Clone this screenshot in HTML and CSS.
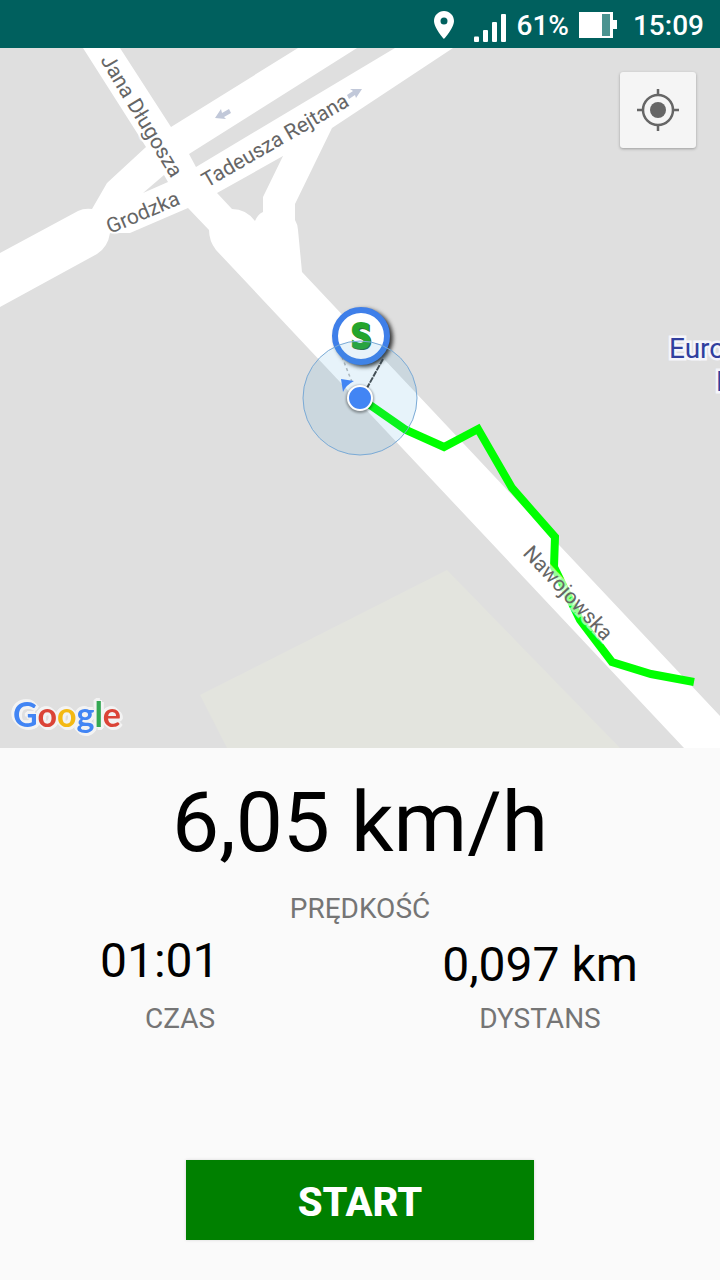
FILE: index.html
```html
<!DOCTYPE html>
<html lang="pl">
<head>
<meta charset="utf-8">
<meta name="viewport" content="width=device-width, initial-scale=1">
<title>Trening</title>
<link rel="stylesheet" href="styles.css">
</head>
<body>
<header class="status">
  <svg class="status-pin" viewBox="0 0 20 28" aria-hidden="true"><path fill="#fff" fill-rule="evenodd" d="M10 0C4.500 0 0 4.400 0 10c0 7 10 18 10 18s10-11 10-18C20 4.400 15.500 0 10 0zm0 6.500a3.500 3.500 0 1 1 0 7 3.500 3.500 0 0 1 0-7z"/></svg>
  <svg class="status-signal" viewBox="0 0 32 28" aria-hidden="true"><g fill="#fff"><rect x="0" y="22.500" width="5" height="5.500" rx="1"/><rect x="9" y="16" width="5" height="12" rx="1"/><rect x="18" y="8" width="5" height="20" rx="1"/><rect x="27" y="0" width="5" height="28" rx="1"/></g></svg>
  <span class="status-charge">61%</span>
  <svg class="status-battery" viewBox="0 0 38 26" aria-hidden="true"><path fill="#fff" d="M0 0h34v8h4v9h-4v9H0z"/><path fill="#4a9390" d="M23 2h8v22h-8z"/></svg>
  <time class="status-time">15:09</time>
</header>

<main class="screen">
  <section class="map" aria-label="Mapa">
    <svg class="map-canvas" viewBox="0 48 720 700" preserveAspectRatio="xMidYMid slice">
      <rect class="ground" x="0" y="48" width="720" height="700"/>
      <path class="park" d="M200 695 447 570 620 748H227z"/>
      <path class="road" fill-rule="evenodd" d="M83 48H120L171 127 298 48H453L332 128 295 204V220Q298 225 298 230L302 272 432 410 720 716V748H684L216 250Q209 241 209 230L188 208 130 233H110Q108 247 97 254L0 307V253L78 211Q84 208 92 209L107 183 146 147z
        M357 48 189 154 196 167 395 48z
        M143 193 164 175 168 182z
        M217 193 283 156 263 197V212Q258 214 255 221Q246 209 232 209z"/>
      <path class="oneway" d="M215 118 221 109 222 113 229 109 231 113 224 117 226 119z"/>
      <path class="oneway" d="M362 89 356 98 355 95 349 99 347 95 353 91 350 89z"/>
      <polyline class="track" points="360,398 406,430 444,447 478,429 512,488 555,537 554,567 580,620 612,662 651,674 694,682"/>
      <text class="street" transform="translate(100 60) rotate(59)">Jana Długosza</text>
      <text class="street" transform="translate(207 188) rotate(-30)">Tadeusza Rejtana</text>
      <text class="street" transform="translate(110 234) rotate(-23)">Grodzka</text>
      <text class="street" transform="translate(522 554) rotate(47)">Nawojowska</text>
      <text class="place" x="669" y="358">Euro</text>
      <text class="place" x="716" y="391">P</text>

      <path d="M383 359 367 388" stroke="#444" stroke-width="2" stroke-dasharray="6 1"/>
      <path d="M342 357 352 382" stroke="#bbb" stroke-width="1.500" stroke-dasharray="3 3"/>
      <circle class="pin-shade" cx="364" cy="338" r="29"/>
      <circle cx="361" cy="336" r="26" fill="#fff" stroke="#3f7fe9" stroke-width="6"/>
      <text class="pin-letter pin-letter-depth" x="362" y="349">S</text>
      <text class="pin-letter" x="361" y="348">S</text>
      <circle class="accuracy" cx="360" cy="398" r="57"/>
      <path d="M341 379 354 381Q346 385 343 392z" fill="#4285f4"/>
      <circle class="dot-shade" cx="360" cy="399" r="14"/>
      <circle cx="360" cy="398" r="12" fill="#4285f4" stroke="#fff" stroke-width="2"/>
    </svg>
    <button class="locate" type="button" aria-label="Moja lokalizacja">
      <svg class="locate-icon" viewBox="0 0 42 42" aria-hidden="true"><g fill="none" stroke="#666" stroke-width="2.500"><circle cx="21" cy="21" r="15"/><path d="M21 0v6M21 36v6M0 21h6M36 21h6"/></g><circle cx="21" cy="21" r="8" fill="#666"/></svg>
    </button>
    <a class="logo" href="#" aria-label="Google"><span class="blue">G</span><span class="red">o</span><span class="yellow">o</span><span class="blue">g</span><span class="green">l</span><span class="red">e</span></a>
  </section>

  <section class="panel">
    <div class="speed">6,05 km/h</div>
    <div class="label">PRĘDKOŚĆ</div>
    <div class="metrics">
      <div class="metric">
        <div class="elapsed">01:01</div>
        <div class="label">CZAS</div>
      </div>
      <div class="metric">
        <div class="distance">0,097 km</div>
        <div class="label">DYSTANS</div>
      </div>
    </div>
    <button class="start" type="button">START</button>
  </section>
</main>
</body>
</html>
```
FILE: styles.css
```css
* {
  box-sizing: border-box;
}

body {
  margin: 0;
  min-height: 100vh;
  display: flex;
  flex-direction: column;
  background: #fafafa;
  color: #000;
  font-family: Roboto, "Noto Sans", sans-serif;
}

.status {
  display: flex;
  align-items: center;
  justify-content: flex-end;
  height: 48px;
  padding: 4px 16px 0 0;
  background: #00605e;
  color: #fff;
  font-size: 28px;
  font-weight: 500;
  line-height: 32px;
}

.status-pin {
  width: 20px;
  height: 28px;
  margin: 0 20px 2px 0;
}

.status-signal {
  width: 32px;
  height: 28px;
  margin: 4px 11px 0 0;
}

.status-charge {
  margin-right: 10px;
}

.status-battery {
  width: 38px;
  height: 26px;
  margin: 0 16px 2px 0;
}

.screen {
  flex: 1;
  display: flex;
  flex-direction: column;
}

.map {
  position: relative;
  flex: 1;
  min-height: 320px;
  overflow: hidden;
}

.map-canvas {
  position: absolute;
  inset: 0;
  width: 100%;
  height: 100%;
}

.ground {
  fill: #dfdfdf;
}

.park {
  fill: #e3e4de;
}

.road {
  fill: #fff;
}

.oneway {
  fill: #c1c8d9;
}

.track {
  fill: none;
  stroke: #0f0;
  stroke-width: 8px;
}

.street {
  fill: #666;
  stroke: rgba(255, 255, 255, 0.6);
  stroke-width: 5px;
  paint-order: stroke;
  font-size: 21px;
}

.place {
  fill: #303f9f;
  stroke: #f5f5fa;
  stroke-width: 5px;
  paint-order: stroke;
  font-size: 28px;
}

.pin-shade {
  fill: #333;
  filter: blur(2px);
}

.pin-letter {
  fill: #25a52c;
  stroke: #25a52c;
  stroke-width: 2px;
  font-family: "DejaVu Sans Mono", monospace;
  font-size: 34px;
  font-weight: 700;
  text-anchor: middle;
}

.pin-letter-depth {
  fill: #2b6b3c;
  stroke: #2b6b3c;
}

.accuracy {
  fill: rgba(66, 160, 220, 0.13);
  stroke: #7aaad6;
  stroke-width: 1px;
}

.dot-shade {
  fill: rgba(0, 0, 0, 0.35);
  filter: blur(1px);
}

.locate {
  position: absolute;
  top: 24px;
  right: 24px;
  display: grid;
  place-items: center;
  width: 76px;
  height: 76px;
  padding: 0;
  border: 0;
  border-radius: 3px;
  background: #f5f5f5;
  box-shadow: 0 1px 3px rgba(0, 0, 0, 0.3);
}

.locate-icon {
  width: 42px;
  height: 42px;
}

.logo {
  position: absolute;
  left: 13px;
  bottom: 12px;
  font-family: Lato, sans-serif;
  font-size: 34px;
  font-weight: 700;
  line-height: 44px;
  text-decoration: none;
  filter: drop-shadow(2px 2px 0 #f3f3f3) drop-shadow(-2px -2px 0 #f3f3f3) drop-shadow(-1px 1px 0 #f3f3f3) drop-shadow(1px -1px 0 #f3f3f3);
}

.blue {
  color: #4285f4;
}

.red {
  color: #db4437;
}

.yellow {
  color: #f4b913;
}

.green {
  color: #34a853;
}

.panel {
  display: flex;
  flex-direction: column;
  align-items: center;
  padding: 25px 0 40px;
}

.speed {
  margin-bottom: 20px;
  font-size: 84px;
  line-height: 100px;
}

.label {
  color: #757575;
  font-size: 28px;
  line-height: 32px;
}

.metrics {
  display: grid;
  grid-template-columns: 1fr 1fr;
  width: 100%;
  margin: 8px 0 125px;
}

.metric {
  display: flex;
  flex-direction: column;
  align-items: center;
  justify-content: space-between;
  gap: 6px;
}

.elapsed {
  width: 160px;
  font-size: 48px;
  line-height: 56px;
}

.distance {
  font-size: 48px;
  line-height: 64px;
}

.start {
  width: 348px;
  max-width: 90%;
  height: 80px;
  padding: 4px 0 0;
  border: 0;
  background: #008000;
  box-shadow: 0 0 3px rgba(0, 0, 0, 0.15);
  color: #fff;
  font-family: inherit;
  font-size: 40px;
  font-weight: 800;
}
```
